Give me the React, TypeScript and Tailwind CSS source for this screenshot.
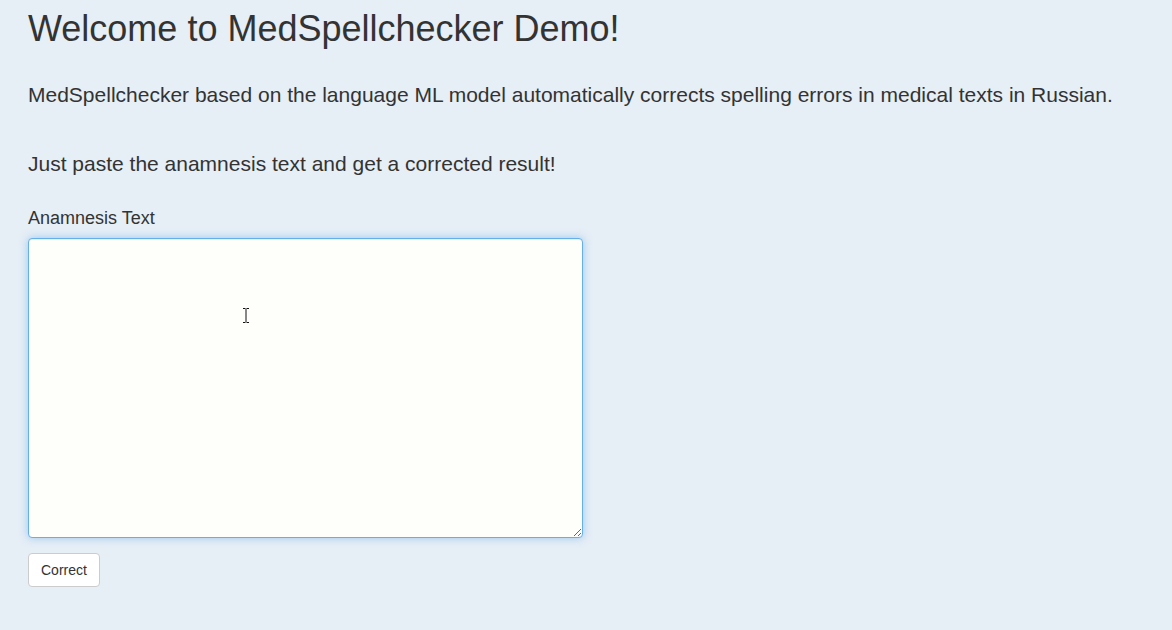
export default function App() {
  return (
    <div className="min-h-[630px] bg-[#e6eef6] px-[28px] text-[#333333] font-['Liberation_Sans',Arial,sans-serif]">
      <h1 className="pt-[9px] text-[36px] leading-[40px]">Welcome to MedSpellchecker Demo!</h1>
      <p className="mt-[32px] text-[21px] leading-[28px]">
        MedSpellchecker based on the language ML model automatically corrects spelling errors in medical texts in Russian.
      </p>
      <p className="mt-[41px] text-[21px] leading-[28px]">Just paste the anamnesis text and get a corrected result!</p>
      <label className="mt-[30px] block text-[18px] leading-[20px]">Anamnesis Text</label>
      <div className="relative mt-[10px] w-[555px]">
        <textarea className="block h-[300px] w-[555px] rounded-[4px] border border-[#66afe9] bg-[#fefefa] px-3 py-2 text-[14px] shadow-[inset_0_1px_1px_rgba(0,0,0,0.075),0_0_8px_rgba(102,175,233,0.6)] outline-none" />
        <svg className="pointer-events-none absolute left-[214px] top-[69px]" width="8" height="17" viewBox="0 0 8 17">
          <path d="M1 1.5h2.5M4.5 1.5H7M4 2v13M1 15.5h2.5M4.5 15.5H7" stroke="#fff" strokeWidth="3" fill="none" />
          <path d="M1 1.5h2.5M4.5 1.5H7M4 2v13M1 15.5h2.5M4.5 15.5H7" stroke="#111" strokeWidth="1" fill="none" />
        </svg>
      </div>
      <button className="mt-[15px] h-[34px] rounded-[4px] border border-[#cccccc] bg-white px-3 text-[14px] leading-[20px] text-[#333333]">
        Correct
      </button>
    </div>
  );
}
